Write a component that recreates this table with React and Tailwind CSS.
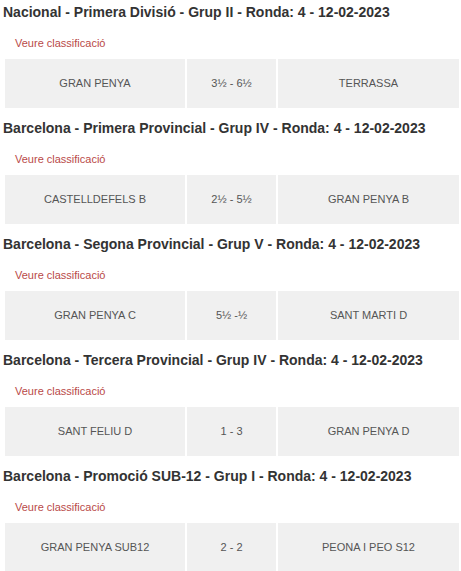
import React from 'react';

const rounds = [
  { title: 'Nacional - Primera Divisió - Grup II - Ronda: 4 - 12-02-2023', home: 'GRAN PENYA', score: '3½ - 6½', away: 'TERRASSA' },
  { title: 'Barcelona - Primera Provincial - Grup IV - Ronda: 4 - 12-02-2023', home: 'CASTELLDEFELS B', score: '2½ - 5½', away: 'GRAN PENYA B' },
  { title: 'Barcelona - Segona Provincial - Grup V - Ronda: 4 - 12-02-2023', home: 'GRAN PENYA C', score: '5½ -½', away: 'SANT MARTI D' },
  { title: 'Barcelona - Tercera Provincial - Grup IV - Ronda: 4 - 12-02-2023', home: 'SANT FELIU D', score: '1 - 3', away: 'GRAN PENYA D' },
  { title: 'Barcelona - Promoció SUB-12 - Grup I - Ronda: 4 - 12-02-2023', home: 'GRAN PENYA SUB12', score: '2 - 2', away: 'PEONA I PEO S12' },
];

function Round({ round }) {
  return (
    <div className="pt-[2px] pb-[8px]">
      <h3 className="pl-[3px] text-[14px] leading-[20px] font-bold text-[#333]">{round.title}</h3>
      <a className="block mt-[12px] pl-[15px] text-[11px] leading-[18px] text-[#b94a48]">Veure classificació</a>
      <div className="mt-[7px] ml-[5px] flex gap-[2px] h-[49px] text-[11px] text-[#555]">
        <div className="w-[180px] bg-[#f0f0f0] flex items-center justify-center">{round.home}</div>
        <div className="w-[89px] bg-[#f0f0f0] flex items-center justify-center">{round.score}</div>
        <div className="w-[181px] bg-[#f0f0f0] flex items-center justify-center">{round.away}</div>
      </div>
    </div>
  );
}

export default function App() {
  return (
    <div className="w-[461px] h-[571px] overflow-hidden bg-white font-['Liberation_Sans',Arial,sans-serif]">
      {rounds.map((r) => (
        <Round key={r.title} round={r} />
      ))}
    </div>
  );
}
